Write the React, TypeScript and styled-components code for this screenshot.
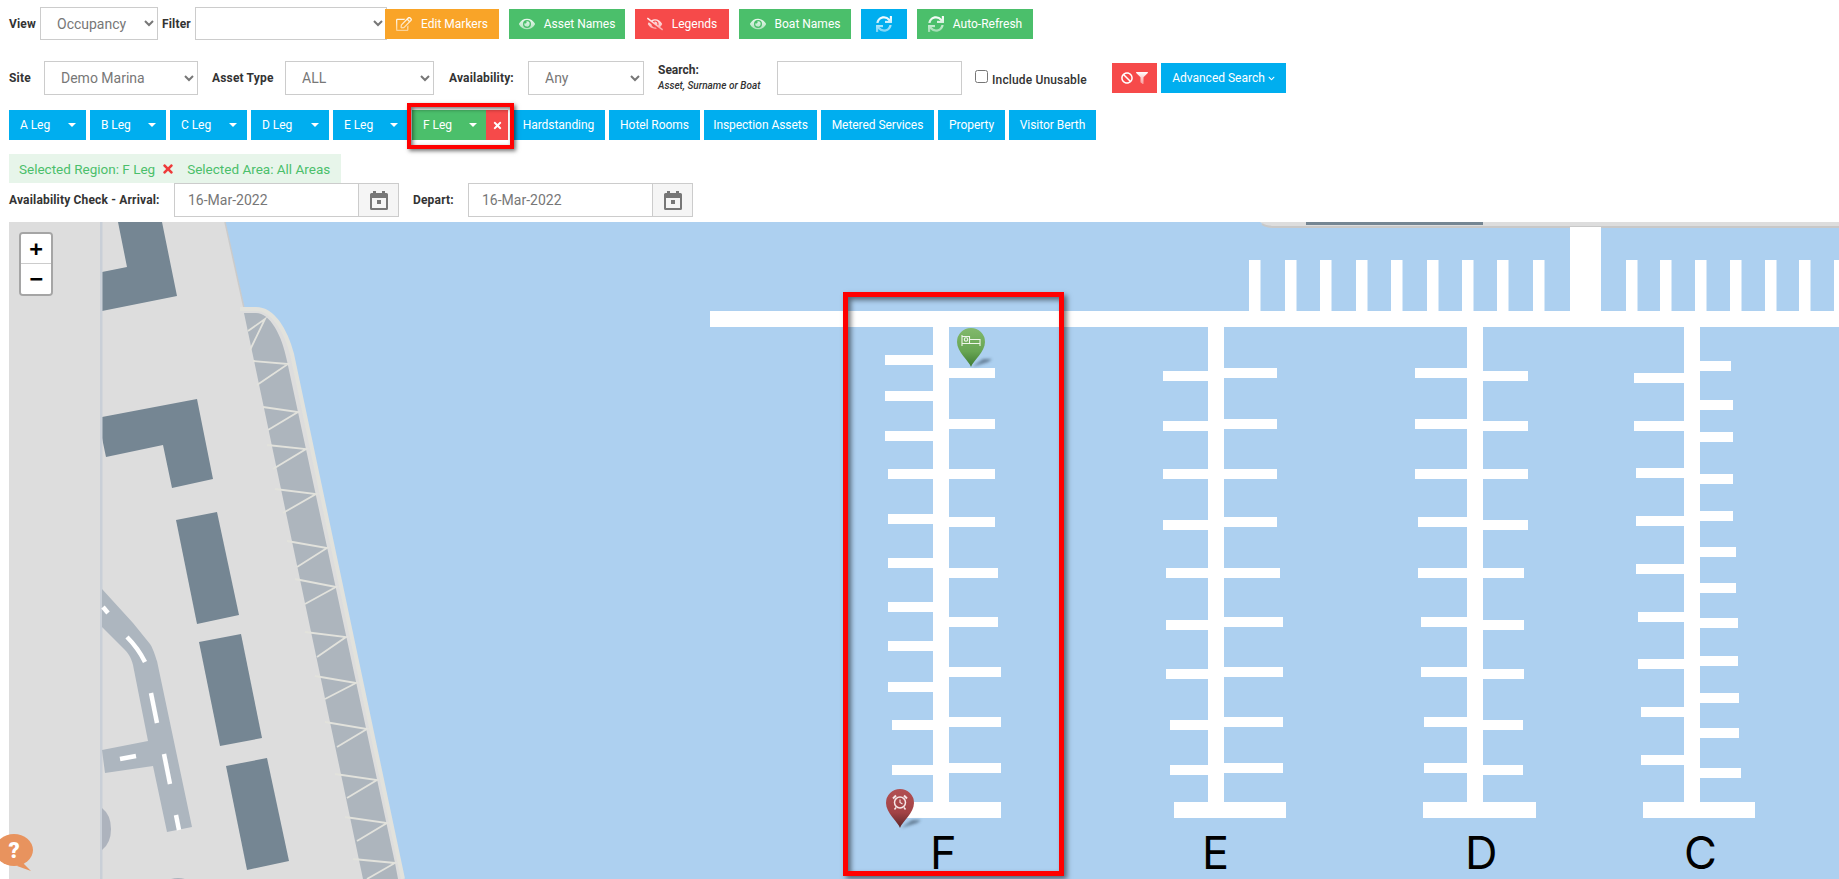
import React from "react";
import styled, { createGlobalStyle } from "styled-components";
import { FaRegEdit, FaEye, FaEyeSlash, FaSync, FaBan, FaFilter, FaChevronDown, FaTimes } from "react-icons/fa";

const GlobalStyle = createGlobalStyle`
    html, body {
        margin: 0;
        padding: 0;
        background: #fff;
        font-family: Roboto, "Open Sans", sans-serif;
        font-size: 12px;
        color: #333;
        overflow: hidden;
    }
`

const BLUE = "#00aeef";
const GREEN = "#4bbf6b";
const RED = "#f64a4a";
const ORANGE = "#f9a428";

const Page = styled.div`
    position: relative;
    width: 1839px;
    height: 879px;
    padding-left: 9px;
    box-sizing: border-box;
    overflow: hidden;
`

const Row = styled.div<{ $top: number; $h: number }>`
    display: flex;
    align-items: center;
    margin-top: ${p => p.$top}px;
    height: ${p => p.$h}px;
`

const Label = styled.label<{ $w: number; $ml?: number }>`
    flex: none;
    width: ${p => p.$w}px;
    margin-left: ${p => p.$ml || 0}px;
    font-weight: 700;
    font-size: 12px;
    letter-spacing: .17px;
    color: #333;
    white-space: nowrap;
`

const Select = styled.select<{ $w: number; $h?: number }>`
    flex: none;
    width: ${p => p.$w}px;
    height: ${p => p.$h || 34}px;
    padding: 0 0 0 12px;
    background: #fff;
    border: 1px solid #ccc;
    border-radius: 0;
    font-family: Roboto, sans-serif;
    font-size: 14px;
    color: #777;
`

const Btn = styled.div<{ $w: number; $bg: string; $ml?: number; $gap?: number }>`
    flex: none;
    display: flex;
    align-items: center;
    justify-content: center;
    gap: ${p => p.$gap ?? 9}px;
    width: ${p => p.$w}px;
    height: 30px;
    margin-left: ${p => p.$ml ?? 10}px;
    background: ${p => p.$bg};
    color: #fff;
    font-size: 12px;
`

const FadeIcon = styled.span<{ $size?: number }>`
    display: inline-flex;
    font-size: ${p => p.$size || 16}px;
    -webkit-mask-image: linear-gradient(#000, rgba(0,0,0,.45));
    mask-image: linear-gradient(#000, rgba(0,0,0,.45));
`

const BanIcon = styled(FaBan)`
    font-size: 12px;
`

const SmallChevron = styled(FaChevronDown)`
    font-size: 7px;
`

const SearchHint = styled.div`
    flex: none;
    width: 119px;
    margin-left: 14px;
    font-weight: 700;
    font-size: 12px;
    line-height: 15px;
    white-space: nowrap;
    small {
        display: block;
        font-size: 10px;
        font-weight: 500;
        font-style: italic;
    }
`

const TextInput = styled.input`
    flex: none;
    box-sizing: border-box;
    width: 185px;
    height: 34px;
    padding: 0 0 0 13px;
    border: 1px solid #ccc;
    font-family: Roboto, sans-serif;
    font-size: 14px;
    color: #777;
`

const CheckLabel = styled.label`
    flex: none;
    display: flex;
    align-items: center;
    width: 137px;
    margin-left: 13px;
    padding-top: 3px;
    font-weight: 500;
    font-size: 12px;
    letter-spacing: .15px;
    color: #333;
    white-space: nowrap;
    input {
        width: 13px;
        height: 13px;
        margin: -6px 4px 0 0;
    }
`

const TabRow = styled(Row)`
    gap: 4px;
`

const Tab = styled.div<{ $w: number }>`
    flex: none;
    display: flex;
    align-items: center;
    justify-content: center;
    box-sizing: border-box;
    width: ${p => p.$w}px;
    height: 30px;
    background: ${BLUE};
    color: #fff;
    font-size: 12px;
    letter-spacing: -.05px;
    white-space: nowrap;
`

const LegTab = styled(Tab)`
    justify-content: space-between;
    padding: 0 10px 0 11px;
`

const Caret = styled.i`
    width: 0;
    height: 0;
    border-left: 4px solid transparent;
    border-right: 4px solid transparent;
    border-top: 4px solid #fff;
`

const ActiveLeg = styled.div`
    position: relative;
    flex: none;
    display: flex;
    width: 96px;
    height: 30px;
    &::after {
        content: "";
        position: absolute;
        left: -5px;
        top: -7px;
        width: 107px;
        height: 46px;
        box-sizing: border-box;
        border: 4px solid #f00;
        box-shadow: 2px 2px 4px rgba(0,0,0,.55), inset 2px 2px 4px rgba(0,0,0,.55);
    }
`

const ActiveName = styled(LegTab)`
    width: 74px;
    background: ${GREEN};
    padding: 0 9px 0 11px;
`

const ActiveClose = styled.div`
    display: flex;
    align-items: center;
    justify-content: center;
    width: 22px;
    height: 30px;
    background: ${RED};
    color: #fff;
    font-size: 11px;
`

const SelectedStrip = styled.div`
    display: flex;
    align-items: center;
    width: 332px;
    height: 29px;
    margin-top: 14px;
    padding-left: 10px;
    box-sizing: border-box;
    background: #e7f5ea;
    color: ${GREEN};
    font-size: 13.5px;
    white-space: nowrap;
    svg {
        color: #ee3a3a;
        font-size: 14px;
        margin: 0 12px 0 6px;
    }
`

const DateGroup = styled.div`
    flex: none;
    display: flex;
    height: 34px;
`

const DateAddon = styled.div`
    display: flex;
    align-items: center;
    justify-content: center;
    box-sizing: border-box;
    width: 40px;
    border: 1px solid #ccc;
    border-left: 0;
    background: #f5f5f5;
`

const MapPanel = styled.div`
    position: relative;
    width: 1830px;
    height: 657px;
    margin-top: 5px;
    background: #add0f0;
    overflow: hidden;
    svg.chart {
        display: block;
    }
`

const ZoomControl = styled.div`
    position: absolute;
    left: 10px;
    top: 10px;
    border: 2px solid rgba(0,0,0,.25);
    border-radius: 4px;
    background-clip: padding-box;
`

const ZoomBtn = styled.a`
    display: block;
    width: 30px;
    height: 30px;
    background: #fff;
    color: #000;
    font: 700 22px/30px "DejaVu Sans Mono", monospace;
    text-align: center;
    border-bottom: 1px solid #ccc;
    box-sizing: border-box;
    &:first-child { border-radius: 2px 2px 0 0; }
    &:last-child { border-radius: 0 0 2px 2px; border-bottom: 0; }
`

const Pin = styled.div<{ $x: number; $y: number }>`
    position: absolute;
    left: ${p => p.$x}px;
    top: ${p => p.$y}px;
    width: 46px;
    height: 42px;
    svg { display: block; }
`

const Highlight = styled.div`
    position: absolute;
    left: 834px;
    top: 70px;
    width: 221px;
    height: 584px;
    box-sizing: border-box;
    border: 5px solid #f00;
    box-shadow: 3px 3px 5px rgba(0,0,0,.5), inset 3px 3px 5px rgba(0,0,0,.5);
`

const HelpBubble = styled.div`
    position: absolute;
    left: 0;
    top: 833px;
    width: 36px;
    height: 40px;
    svg { display: block; }
`

type Pier = {
    letter: string;
    letterX: number;
    stem: number;
    bar: [number, number];
    left: [number, number[]][];
    right: [number, number[]][];
};

const piers: Pier[] = [
    {
        letter: "F", letterX: 930, stem: 933, bar: [898, 1001],
        left: [[885, [355, 391, 431]], [888, [469, 514, 558, 602, 641, 682]], [892, [720, 765]]],
        right: [[995, [368, 419, 469, 517]], [998, [568, 617]], [1001, [667, 717, 763]]],
    },
    {
        letter: "E", letterX: 1202, stem: 1208, bar: [1174, 1286],
        left: [[1163, [371, 421, 469, 520]], [1166, [568, 620, 669]], [1170, [720, 765]]],
        right: [[1277, [368, 419, 469, 517]], [1280, [568]], [1283, [617, 667, 717, 763]]],
    },
    {
        letter: "D", letterX: 1465, stem: 1467, bar: [1423, 1536],
        left: [[1415, [368, 419, 469]], [1418, [517, 568]], [1421, [617, 667]], [1424, [717, 763]]],
        right: [[1528, [371, 421, 469, 520]], [1524, [568, 620, 669]], [1523, [720, 765]]],
    },
    {
        letter: "C", letterX: 1684, stem: 1684, bar: [1643, 1755],
        left: [[1634, [373, 421]], [1636, [468, 516, 564]], [1638, [612, 659]], [1641, [707, 755]]],
        right: [[1731, [361]], [1733, [400, 432, 474, 511]], [1736, [547, 583]], [1738, [618, 656]], [1739, [693, 728]], [1741, [768]]],
    },
];

const teeth = [1249, 1285, 1320, 1356, 1391, 1427, 1462, 1497, 1533, 1626, 1660, 1695, 1730, 1765, 1799, 1834];

const buildings = [
    "118,222 162,222 177,296 102,311 102,272 127,267",
    "102,417 197,399 213,479 172,488 163,445 106,457 102,438",
    "176,520 217,512 239,615 197,624",
    "199,642 241,634 262,738 220,746",
    "226,766 267,758 289,861 247,870",
];

// zig-zag bracing along the sea wall: [from, apex, to]
const bracing = [
    [248, 331, 265, 319, 250, 350],
    [253, 361, 288, 364, 257, 385],
    [263, 407, 298, 412, 268, 430],
    [267, 445, 306, 449, 273, 469],
    [275, 489, 316, 494, 283, 513],
    [287, 541, 327, 548, 297, 567],
    [295, 579, 336, 587, 305, 604],
    [305, 632, 346, 637, 317, 657],
    [315, 676, 356, 683, 325, 699],
    [325, 722, 367, 729, 337, 747],
    [335, 774, 377, 780, 347, 798],
    [345, 817, 387, 823, 357, 841],
    [353, 859, 395, 863, 367, 879],
];

function CalendarIcon() {
    return (
        <svg width="18" height="19" viewBox="0 0 18 19">
            <path d="M3 0h3v2h6V0h3v2h1.500A1.500 1.500 0 0 1 18 3.500v14a1.500 1.500 0 0 1-1.500 1.500h-15A1.500 1.500 0 0 1 0 17.500v-14A1.500 1.500 0 0 1 1.500 2H3zM2 7v10h14V7z" fill="#777" />
            <rect x="7" y="9" width="4" height="4" fill="#777" />
        </svg>
    );
}

function MarkerPin({ top, mid, tip, id, children }: { top: string; mid: string; tip: string; id: string; children: React.ReactNode }) {
    return (
        <svg width="46" height="42" viewBox="0 0 46 42">
            <defs>
                <linearGradient id={id} x1="0" y1="0" x2="0" y2="1">
                    <stop offset="0" stopColor={top} />
                    <stop offset="0.6" stopColor={mid} />
                    <stop offset="1" stopColor={tip} />
                </linearGradient>
                <filter id={id + "b"} x="-30%" y="-60%" width="160%" height="220%">
                    <feGaussianBlur stdDeviation="1.500" />
                </filter>
            </defs>
            <path d="M15 39 L26 31 L35 31 L31 34 Z" fill="#2c3e50" opacity=".55" filter={`url(#${id}b)`} />
            <path d="M14 39C12 33 0 24 0 14A14 14 0 1 1 28 14C28 24 16 33 14 39Z" fill={`url(#${id})`} />
            {children}
        </svg>
    );
}

function SeaMap() {
    return (
        <svg className="chart" width="1830" height="657" viewBox="9 222 1830 657">
            {/* land */}
            <path d="M9 222H225L244 308H256C274 308 286 332 292 354L403 879H9Z" fill="#ddd" />
            <path d="M225 222L244 308" stroke="#cbcbcb" strokeWidth="1.500" fill="none" />
            {/* sea wall */}
            <path d="M244 313H256C270 313 282 335 287 361L395 863L398 879H363Z" fill="#adb5bd" />
            <path d="M240 309H256C274 309 286 332 292 354L403 879" stroke="#e2e2dc" strokeWidth="4" fill="none" />
            {bracing.map((b, i) => (
                <polyline key={i} points={`${b[0]},${b[1]} ${b[2]},${b[3]} ${b[4]},${b[5]}`} stroke="#e2e2dc" strokeWidth="1.800" fill="none" />
            ))}
            {/* top land strip */}
            <path d="M1260 222C1266 227 1270 228 1276 228H1839V222Z" fill="#ddd" />
            <path d="M1262 224C1266 227 1270 227 1276 227H1839" stroke="#c8c8c8" strokeWidth="2" fill="none" />
            <rect x="1306" y="222" width="177" height="3" fill="#758693" />
            {/* buildings */}
            {buildings.map((pts, i) => <polygon key={i} points={pts} fill="#758693" />)}
            <rect x="100" y="222" width="2.500" height="657" fill="#c9cfd7" />
            {/* road */}
            <path d="M102 589L133 623L150 644C154 650 156 659 157 661L192 827L167 832L153 766L105 773L102 750L148 741L133 665C131 657 128 653 124 649L102 627Z" fill="#adb6bf" />
            <g stroke="#fff" strokeWidth="4.500" fill="none">
                <path d="M103 607L108 613" />
                <path d="M127 637Q138 648 145 662" />
                <path d="M151 693L157 723" />
                <path d="M164 754L170 784" />
                <path d="M176 815L179 830" />
                <path d="M120 759L136 756" />
            </g>
            <path d="M102 808Q111 815 111 829Q111 843 102 850Z" fill="#adb3bd" />
            <ellipse cx="178" cy="886" rx="14" ry="8" fill="#adb3bd" />
            {/* walkway */}
            <g fill="#fff">
                <rect x="710" y="311" width="1129" height="16" />
                <rect x="1570" y="227" width="31" height="84" />
                {teeth.map(x => <rect key={x} x={x} y="260" width="11.500" height="51" />)}
                {piers.map(p => (
                    <g key={p.letter}>
                        <rect x={p.stem} y="327" width="16" height="476" />
                        <rect x={p.bar[0]} y="802" width={p.bar[1] - p.bar[0]} height="16" />
                        {p.left.map(([x, ys]) => ys.map(y => <rect key={`l${y}`} x={x} y={y} width={p.stem - x} height="10" />))}
                        {p.right.map(([x, ys]) => ys.map(y => <rect key={`r${y}`} x={p.stem + 16} y={y} width={x - p.stem - 16} height="10" />))}
                    </g>
                ))}
            </g>
            {piers.map(p => (
                <text key={p.letter} x={p.letterX} y="869" fontFamily="Inter, sans-serif" fontSize="45" fill="#000">{p.letter}</text>
            ))}
        </svg>
    );
}

const legs: [string, number][] = [["A Leg", 77], ["B Leg", 76], ["C Leg", 77], ["D Leg", 78], ["E Leg", 75]];
const others: [string, number][] = [["Hardstanding", 93], ["Hotel Rooms", 91], ["Inspection Assets", 113], ["Metered Services", 113], ["Property", 67], ["Visitor Berth", 87]];

export default function App() {
    return (
        <Page>
            <GlobalStyle />
            <Row $top={7} $h={33}>
                <Label $w={31}>View</Label>
                <Select $w={118} $h={33} defaultValue="Occupancy">
                    <option>Occupancy</option>
                </Select>
                <Label $w={33} $ml={4}>Filter</Label>
                <Select $w={192} $h={33}><option></option></Select>
                <Btn $w={114} $bg={ORANGE} $ml={-2}><FadeIcon><FaRegEdit /></FadeIcon>Edit Markers</Btn>
                <Btn $w={116} $bg={GREEN}><FadeIcon><FaEye /></FadeIcon>Asset Names</Btn>
                <Btn $w={94} $bg={RED}><FadeIcon><FaEyeSlash /></FadeIcon>Legends</Btn>
                <Btn $w={112} $bg={GREEN}><FadeIcon><FaEye /></FadeIcon>Boat Names</Btn>
                <Btn $w={46} $bg={BLUE}><FadeIcon><FaSync /></FadeIcon></Btn>
                <Btn $w={116} $bg={GREEN}><FadeIcon><FaSync /></FadeIcon>Auto-Refresh</Btn>
            </Row>
            <Row $top={21} $h={34}>
                <Label $w={35}>Site</Label>
                <Select $w={154} defaultValue="Demo Marina"><option>Demo Marina</option></Select>
                <Label $w={73} $ml={14}>Asset Type</Label>
                <Select $w={149} defaultValue="ALL"><option>ALL</option></Select>
                <Label $w={79} $ml={15}>Availability:</Label>
                <Select $w={116} defaultValue="Any"><option>Any</option></Select>
                <SearchHint>Search:<small>Asset, Surname or Boat</small></SearchHint>
                <TextInput />
                <CheckLabel><input type="checkbox" />Include Unusable</CheckLabel>
                <Btn $w={45} $bg={RED} $ml={0} $gap={3}>
                    <BanIcon /><FadeIcon $size={12}><FaFilter /></FadeIcon>
                </Btn>
                <Btn $w={125} $bg={BLUE} $ml={4} $gap={3}>Advanced Search<SmallChevron /></Btn>
            </Row>
            <TabRow $top={15} $h={30}>
                {legs.map(([name, w]) => (
                    <LegTab key={name} $w={w}>{name}<Caret /></LegTab>
                ))}
                <ActiveLeg>
                    <ActiveName $w={74}>F Leg<Caret /></ActiveName>
                    <ActiveClose><FaTimes /></ActiveClose>
                </ActiveLeg>
                {others.map(([name, w]) => (
                    <Tab key={name} $w={w}>{name}</Tab>
                ))}
            </TabRow>
            <SelectedStrip>Selected Region: F Leg<FaTimes />Selected Area: All Areas</SelectedStrip>
            <Row $top={0} $h={34}>
                <Label $w={165}>Availability Check - Arrival:</Label>
                <DateGroup>
                    <TextInput defaultValue="16-Mar-2022" />
                    <DateAddon><CalendarIcon /></DateAddon>
                </DateGroup>
                <Label $w={55} $ml={14}>Depart:</Label>
                <DateGroup>
                    <TextInput defaultValue="16-Mar-2022" />
                    <DateAddon><CalendarIcon /></DateAddon>
                </DateGroup>
            </Row>
            <MapPanel>
                <SeaMap />
                <ZoomControl>
                    <ZoomBtn>+</ZoomBtn>
                    <ZoomBtn>−</ZoomBtn>
                </ZoomControl>
                <Highlight />
                <Pin $x={948} $y={106}>
                    <MarkerPin id="pinGreen" top="#82b96c" mid="#67a553" tip="#3f7a33">
                        <g fill="none" stroke="#eef5ea" strokeWidth="1.100">
                            <path d="M5 7V18M5 15.500H23V18M23 15.500V11.500H12.500V15" />
                            <circle cx="9" cy="11.500" r="1.700" />
                            <path d="M5 8.500H12.500V11.500" />
                        </g>
                    </MarkerPin>
                </Pin>
                <Pin $x={877} $y={567}>
                    <MarkerPin id="pinRed" top="#b24f52" mid="#a34346" tip="#5c2628">
                        <g fill="none" stroke="#f6e6e6" strokeWidth="1.500">
                            <circle cx="14" cy="13.500" r="5.500" />
                            <path d="M14 10.500V13.500L16.500 15" strokeWidth="1.100" />
                            <path d="M7 9.500L10 6.500M21 9.500L18 6.500" strokeWidth="2" />
                            <path d="M10 18.500L8.500 20.500M18 18.500L19.500 20.500" />
                        </g>
                    </MarkerPin>
                </Pin>
            </MapPanel>
            <HelpBubble>
                <svg width="36" height="40" viewBox="0 0 36 40">
                    <ellipse cx="14" cy="17" rx="19" ry="16" fill="#e8935e" />
                    <path d="M22 29L31 38L17 33Z" fill="#e8935e" />
                    <text x="14" y="25" textAnchor="middle" fontFamily="Roboto, sans-serif" fontWeight="900" fontSize="22" fill="#fff">?</text>
                </svg>
            </HelpBubble>
        </Page>
    );
}
